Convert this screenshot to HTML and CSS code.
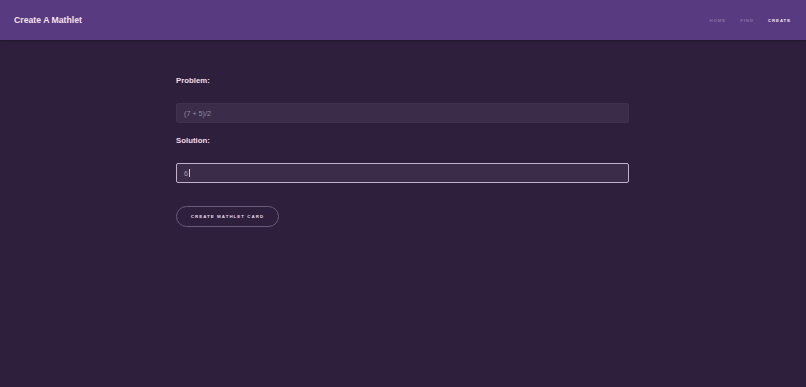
FILE: index.html
```html
<!DOCTYPE html>
<html>
<head>
<meta charset="utf-8">
<link rel="stylesheet" href="styles.css">
</head>
<body>
<header class="topbar">
  <div class="brand">Create A Mathlet</div>
  <nav class="nav">
    <a class="nav-link">HOME</a>
    <a class="nav-link">FIND</a>
    <a class="nav-link active">CREATE</a>
  </nav>
</header>
<main class="content">
  <form class="form">
    <label class="label">Problem:</label>
    <div class="field">(7 + 5)/2</div>
    <label class="label">Solution:</label>
    <div class="field focused">6<span class="caret"></span></div>
    <button type="button" class="btn">CREATE MATHLET CARD</button>
  </form>
</main>
</body>
</html>
```
FILE: styles.css
```css
html, body {
  margin: 0;
  padding: 0;
  height: 100%;
}
body {
  background: #2e1f3d;
  font-family: "Liberation Sans", Arial, sans-serif;
}
.topbar {
  height: 40px;
  background: #583a80;
  display: flex;
  align-items: center;
  justify-content: space-between;
  padding: 0 15px 0 14px;
  box-sizing: border-box;
  box-shadow: 0 1px 2px rgba(0,0,0,0.3);
}
.brand {
  color: #f5e1ea;
  font-weight: bold;
  font-size: 8.7px;
}
.nav {
  display: flex;
  gap: 14px;
}
.nav-link {
  font-size: 4.3px;
  font-weight: bold;
  letter-spacing: 0.95px;
  color: #8a70a8;
}
.nav-link.active {
  color: #f5e6ee;
}
.content {
  display: flex;
  justify-content: center;
  padding-top: 36px;
}
.form {
  width: 453px;
  display: flex;
  flex-direction: column;
  margin-left: -1px;
}
.label {
  color: #f3dde6;
  font-weight: bold;
  font-size: 7.8px;
  height: 9px;
  line-height: 9px;
}
.field {
  margin-top: 18px;
  margin-bottom: 13px;
  height: 20px;
  box-sizing: border-box;
  background: #3b2c4a;
  border: 1px solid #3f3050;
  border-radius: 2px;
  color: #928aa0;
  font-size: 7.2px;
  padding: 0 7px;
  display: flex;
  align-items: center;
}
.field.focused {
  border: 1px solid #c2b0cc;
  color: #a89ab5;
}
.caret {
  display: inline-block;
  width: 1px;
  height: 8px;
  background: #d8c8e0;
  margin-left: 1px;
}
.btn {
  align-self: flex-start;
  margin-top: 10px;
  width: 103px;
  height: 21px;
  background: transparent;
  border: 1px solid #6a5a7c;
  border-radius: 11px;
  color: #eadce8;
  font-family: "Liberation Sans", Arial, sans-serif;
  font-size: 4.4px;
  font-weight: bold;
  letter-spacing: 1.05px;
  padding: 0;
}
```
